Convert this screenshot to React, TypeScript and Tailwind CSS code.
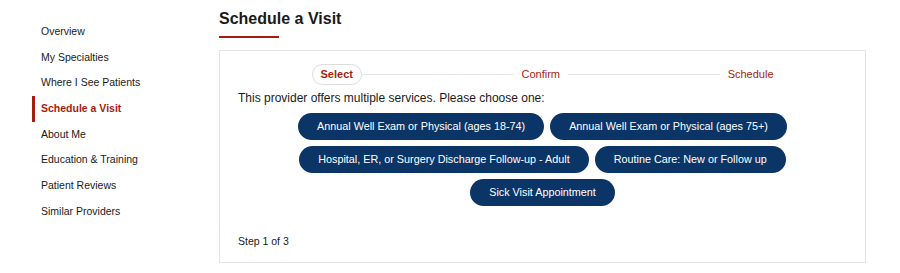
const navItems = [
  'Overview',
  'My Specialties',
  'Where I See Patients',
  'Schedule a Visit',
  'About Me',
  'Education & Training',
  'Patient Reviews',
  'Similar Providers',
];

const services = [
  'Annual Well Exam or Physical (ages 18-74)',
  'Annual Well Exam or Physical (ages 75+)',
  'Hospital, ER, or Surgery Discharge Follow-up - Adult',
  'Routine Care: New or Follow up',
  'Sick Visit Appointment',
];

export default function App() {
  const active = 'Schedule a Visit';

  return (
    <div
      className="flex w-[900px] h-[273px] bg-white text-[#222]"
      style={{ fontFamily: '"Liberation Sans", Arial, sans-serif' }}
    >
      <nav className="w-[219px] shrink-0 pl-[32px] pt-[19px]">
        {navItems.map((item) => (
          <div
            key={item}
            className={`h-[25.7px] flex items-center pl-[6px] border-l-[3px] text-[10.5px] ${
              item === active
                ? 'border-[#a71d0b] text-[#a71d0b] font-bold'
                : 'border-transparent text-[#1a1a1a]'
            }`}
          >
            {item}
          </div>
        ))}
      </nav>

      <main className="w-[647px] pt-[9px]">
        <h2 className="text-[16px] leading-[20px] font-bold text-[#1a1a1a]">Schedule a Visit</h2>
        <div className="mt-[7px] h-[2px] w-[60px] bg-[#a71d0b]" />

        <div className="mt-[12px] border border-[#e4e4e4] px-[18px] pt-[13px] pb-[14px]">
          <div className="mx-auto flex w-[462px] items-center text-[11px] text-[#a71d0b]">
            <span className="h-[21px] px-[8px] flex items-center rounded-full border border-[#dcdcdc] font-bold">
              Select
            </span>
            <span className="flex-1 h-px bg-[#e6e6e6] mr-[8px]" />
            <span>Confirm</span>
            <span className="flex-1 h-px bg-[#e6e6e6] mx-[8px]" />
            <span>Schedule</span>
          </div>

          <p className="mt-[5px] text-[12px] leading-[16px] text-[#1a1a1a]">
            This provider offers multiple services. Please choose one:
          </p>

          <div className="mt-[7px] flex flex-wrap justify-center gap-[6px]">
            {services.map((s) => (
              <button
                key={s}
                className="h-[27px] px-[19px] rounded-full bg-[#0b3566] text-white text-[10.8px]"
              >
                {s}
              </button>
            ))}
          </div>

          <p className="mt-[28px] text-[10.5px] leading-[14px] text-[#1a1a1a]">Step 1 of 3</p>
        </div>
      </main>
    </div>
  );
}
